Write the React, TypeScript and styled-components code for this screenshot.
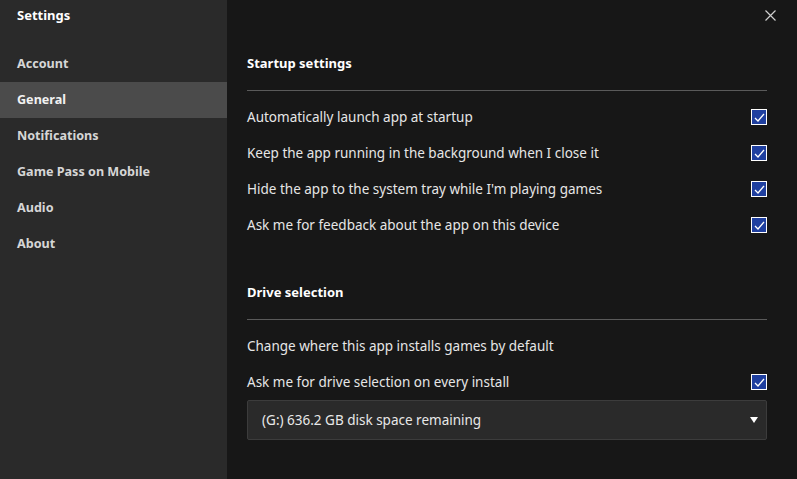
import React from "react";
import styled, { createGlobalStyle } from "styled-components";

const Global = createGlobalStyle`
  html, body { margin: 0; padding: 0; background: #171717; }
  body { font-family: "Noto Sans", "Open Sans", sans-serif; }
  #root { height: 479px; }
`;

const Shell = styled.div`
  display: flex;
  width: 797px;
  height: 479px;
  background: #171717;
  overflow: hidden;
`;

const Sidebar = styled.nav`
  width: 227px;
  flex: none;
  background: #2a2a2a;
  display: flex;
  flex-direction: column;
`;

const SideTitle = styled.div`
  height: 30px;
  padding-left: 17px;
  display: flex;
  align-items: center;
  font-size: 13px;
  font-weight: 700;
  color: #ffffff;
  margin-bottom: 16px;
`;

const NavItem = styled.div<{ $active?: boolean }>`
  height: 36px;
  padding-left: 17px;
  padding-bottom: 1px;
  box-sizing: border-box;
  display: flex;
  align-items: center;
  font-size: 12.6px;
  font-weight: 700;
  color: ${(p) => (p.$active ? "#f2f2f2" : "#d6d6d6")};
  background: ${(p) => (p.$active ? "#4b4b4b" : "transparent")};
`;

const Main = styled.main`
  flex: 1;
  position: relative;
  padding: 46px 30px 0 20px;
  display: flex;
  flex-direction: column;
  color: #e8e8e8;
`;

const Close = styled.button`
  position: absolute;
  top: 8px;
  right: 20px;
  width: 14px;
  height: 14px;
  padding: 0;
  border: none;
  background: transparent;
  display: flex;
  align-items: center;
  justify-content: center;
`;

const SectionTitle = styled.div`
  height: 34px;
  display: flex;
  align-items: center;
  font-size: 13px;
  font-weight: 700;
  color: #ffffff;
`;

const Divider = styled.div`
  height: 1px;
  background: #5a5a5a;
  margin: 10px 0 8px;
`;

const Row = styled.div`
  height: 36px;
  display: flex;
  align-items: center;
  justify-content: space-between;
  font-size: 13.5px;
  color: #e6e6e6;
`;

const Box = styled.span`
  width: 14px;
  height: 14px;
  border: 1px solid #ffffff;
  background: #1f3f9f;
  display: flex;
  align-items: center;
  justify-content: center;
`;

const Gap = styled.div`
  height: 32px;
`;

const Select = styled.div`
  height: 38px;
  border: 1px solid #3c3c3c;
  border-radius: 2px;
  background: #2a2a2a;
  display: flex;
  align-items: center;
  justify-content: space-between;
  padding: 0 8px 0 14px;
  font-size: 13.5px;
  color: #e8e8e8;
`;

const Check = () => (
  <Box>
    <svg width="11" height="9" viewBox="0 0 11 9">
      <path d="M1 5 L4 8 L10 1" fill="none" stroke="#ffffff" strokeWidth="1.3" />
    </svg>
  </Box>
);

const startup = [
  "Automatically launch app at startup",
  "Keep the app running in the background when I close it",
  "Hide the app to the system tray while I'm playing games",
  "Ask me for feedback about the app on this device",
];

export default function App() {
  return (
    <>
      <Global />
      <Shell>
        <Sidebar>
          <SideTitle>Settings</SideTitle>
          {["Account", "General", "Notifications", "Game Pass on Mobile", "Audio", "About"].map((n) => (
            <NavItem key={n} $active={n === "General"}>
              {n}
            </NavItem>
          ))}
        </Sidebar>
        <Main>
          <Close aria-label="Close">
            <svg width="11" height="11" viewBox="0 0 11 11">
              <path d="M0.5 0.5 L10.5 10.5 M10.5 0.5 L0.5 10.5" stroke="#cfcfcf" strokeWidth="1.2" />
            </svg>
          </Close>
          <SectionTitle>Startup settings</SectionTitle>
          <Divider />
          {startup.map((t) => (
            <Row key={t}>
              {t}
              <Check />
            </Row>
          ))}
          <Gap />
          <SectionTitle>Drive selection</SectionTitle>
          <Divider />
          <Row>Change where this app installs games by default</Row>
          <Row>
            Ask me for drive selection on every install
            <Check />
          </Row>
          <Select>
            (G:) 636.2 GB disk space remaining
            <svg width="8" height="6" viewBox="0 0 8 6">
              <path d="M0 0 H8 L4 6 Z" fill="#ffffff" />
            </svg>
          </Select>
        </Main>
      </Shell>
    </>
  );
}
